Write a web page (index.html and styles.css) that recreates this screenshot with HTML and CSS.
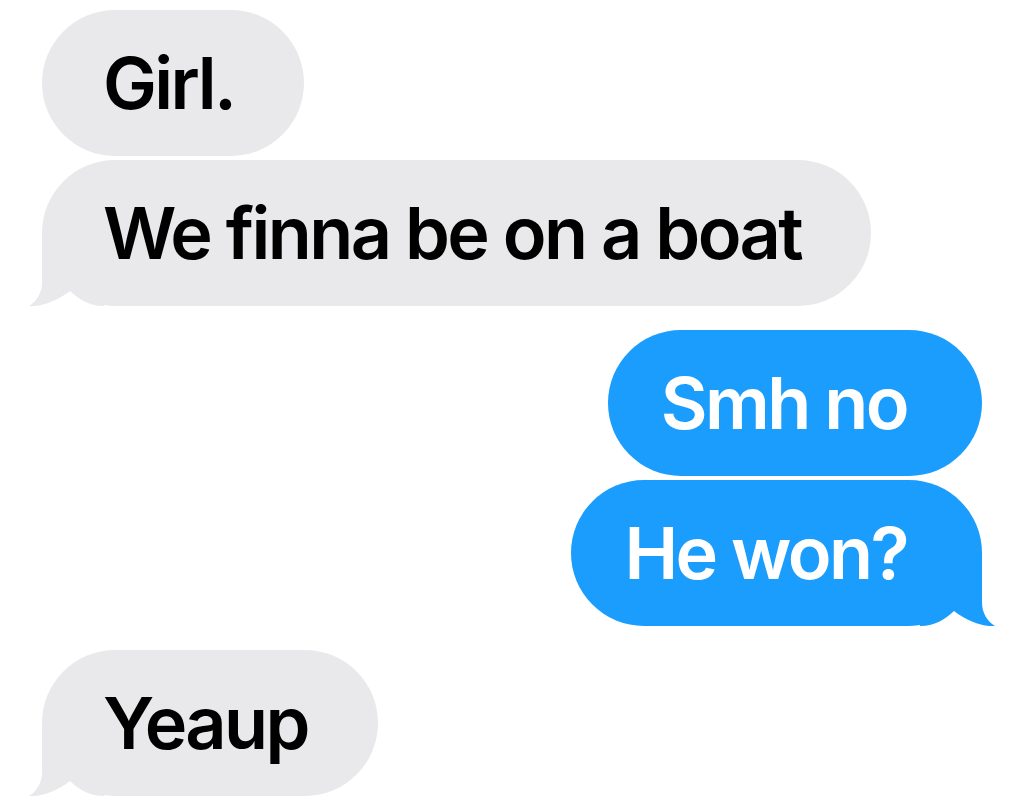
FILE: index.html
```html
<!DOCTYPE html>
<html lang="en">
<head>
  <meta charset="UTF-8" />
  <title>Messages</title>
  <meta name="viewport" content="width=device-width, initial-scale=1.0"/>
  <link rel="stylesheet" href="styles.css">
</head>
<body>
  <div class="thread">
    <div class="group">
      <div class="msg them">Girl.</div>
      <div class="msg them tailed">We finna be on a boat
        <svg class="tail" viewBox="-14 73 80 73"><path d="M0 73 L0 122 C0 133 -5 141 -13 146 C-2 147 14 142 28 131 C37 139 46 146 62 146 L62 73 Z"/></svg>
      </div>
    </div>

    <div class="group">
      <div class="msg me">Smh no</div>
      <div class="msg me tailed">He won?
        <svg class="tail" viewBox="-14 73 80 73"><path d="M0 73 L0 122 C0 133 -5 141 -13 146 C-2 147 14 142 28 131 C37 139 46 146 62 146 L62 73 Z"/></svg>
      </div>
    </div>

    <div class="group">
      <div class="msg them tailed">Yeaup
        <svg class="tail" viewBox="-14 73 80 73"><path d="M0 73 L0 122 C0 133 -5 141 -13 146 C-2 147 14 142 28 131 C37 139 46 146 62 146 L62 73 Z"/></svg>
      </div>
    </div>
  </div>
</body>
</html>
```

FILE: styles.css
```css
body {
  background-color: white;
  font-family: Inter, "Noto Sans", sans-serif;
  margin: 0;
  padding: 0;
}
.thread {
  display: flex;
  flex-direction: column;
  gap: 24px;
  padding: 10px 42px 0 42px;
}
.group {
  display: flex;
  flex-direction: column;
  gap: 4px;
}
.msg {
  position: relative;
  width: fit-content;
  font-size: 72px;
  font-weight: 600;
  letter-spacing: -2.6px;
  line-height: 86px;
  padding: 30px 70px 30px 61px;
  border-radius: 73px;
  white-space: nowrap;
}
.them {
  align-self: flex-start;
  background-color: #e9e9eb;
  color: black;
}
.me {
  align-self: flex-end;
  background-color: #1a9dfc;
  color: white;
  padding-left: 53px;
  padding-right: 75px;
}
.tail {
  position: absolute;
  bottom: 0;
  left: -14px;
  width: 80px;
  height: 73px;
}
.them .tail {
  fill: #e9e9eb;
}
.me .tail {
  left: auto;
  right: -14px;
  transform: scaleX(-1);
  fill: #1a9dfc;
}
```
